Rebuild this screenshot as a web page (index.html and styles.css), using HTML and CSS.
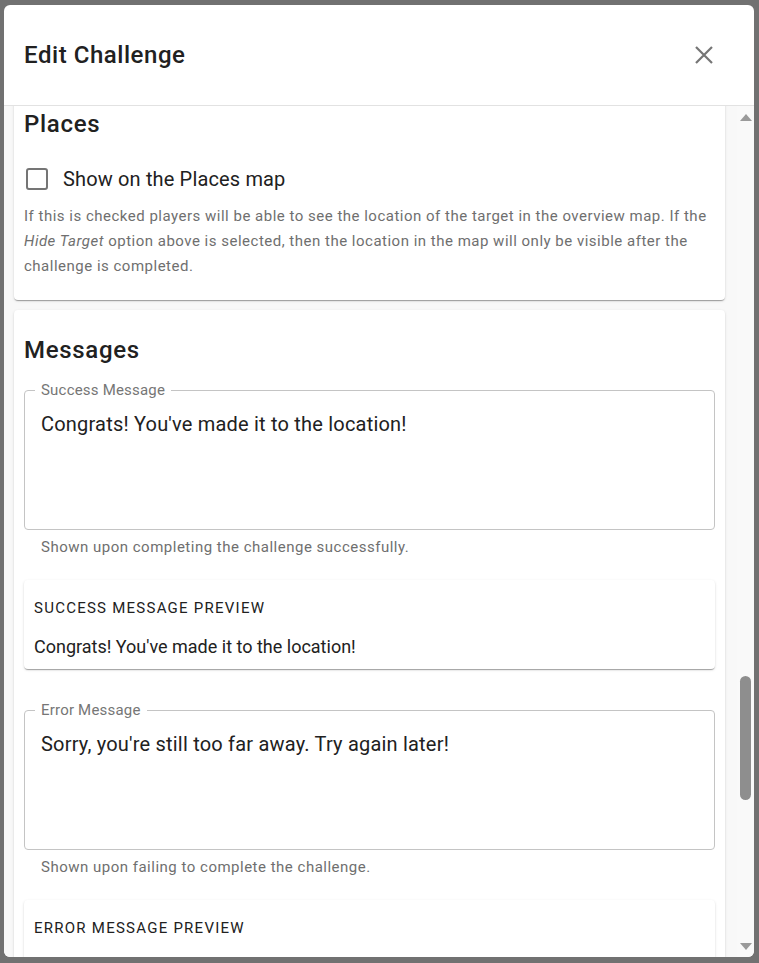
FILE: index.html
```html
<!DOCTYPE html>
<html lang="en">
<head>
<meta charset="utf-8">
<title>Edit Challenge</title>
<link rel="stylesheet" href="styles.css">
</head>
<body>
<div class="backdrop">
  <div class="dialog">
    <header class="dialog-header">
      <h2 class="dialog-title">Edit Challenge</h2>
      <button class="close-btn" aria-label="Close">
        <svg width="18" height="18" viewBox="0 0 18 18"><path d="M1 1L17 17M17 1L1 17" stroke="#757575" stroke-width="2.2" fill="none"/></svg>
      </button>
    </header>
    <div class="dialog-body">
      <div class="content">
        <section class="card card-places">
          <h3 class="section-title">Places</h3>
          <label class="check-row">
            <span class="checkbox"></span>
            <span class="check-label">Show on the Places map</span>
          </label>
          <p class="help">If this is checked players will be able to see the location of the target in the overview map. If the <em>Hide Target</em> option above is selected, then the location in the map will only be visible after the challenge is completed.</p>
        </section>

        <section class="card card-messages">
          <h3 class="section-title">Messages</h3>

          <fieldset class="field">
            <legend class="field-label">Success Message</legend>
            <div class="field-value">Congrats! You've made it to the location!</div>
          </fieldset>
          <p class="field-help">Shown upon completing the challenge successfully.</p>

          <div class="preview">
            <div class="preview-title">Success Message Preview</div>
            <div class="preview-text">Congrats! You've made it to the location!</div>
          </div>

          <fieldset class="field field-error">
            <legend class="field-label">Error Message</legend>
            <div class="field-value">Sorry, you're still too far away. Try again later!</div>
          </fieldset>
          <p class="field-help">Shown upon failing to complete the challenge.</p>

          <div class="preview">
            <div class="preview-title">Error Message Preview</div>
            <div class="preview-text">Sorry, you're still too far away. Try again later!</div>
          </div>
        </section>
      </div>
      <div class="scrollbar">
        <div class="arrow arrow-up"></div>
        <div class="track">
          <div class="thumb"></div>
        </div>
        <div class="arrow arrow-down"></div>
      </div>
    </div>
  </div>
</div>
</body>
</html>
```
FILE: styles.css
```css
* { box-sizing: border-box; }
html, body {
  margin: 0;
  padding: 0;
  width: 759px;
  height: 963px;
  overflow: hidden;
  font-family: Roboto, "Liberation Sans", sans-serif;
  color: #212121;
}
.backdrop {
  width: 759px;
  height: 963px;
  background: #717171;
  padding: 5px 5px 6px 4px;
}
.dialog {
  width: 750px;
  height: 952px;
  background: #fff;
  border-radius: 6px;
  overflow: hidden;
  display: flex;
  flex-direction: column;
}
.dialog-header {
  flex: 0 0 auto;
  height: 101px;
  border-bottom: 1px solid #e2e2e2;
  display: flex;
  align-items: center;
  justify-content: space-between;
  padding: 0 41px 0 20px;
}
.dialog-title {
  margin: 0;
  font-size: 24px;
  line-height: 32px;
  font-weight: 500;
  letter-spacing: 0.55px;
  color: #212121;
}
.close-btn {
  border: 0;
  background: none;
  padding: 0;
  width: 18px;
  height: 18px;
  display: block;
}
.close-btn svg { display: block; }
.dialog-body {
  flex: 1 1 auto;
  min-height: 0;
  display: flex;
}
.content {
  flex: 1 1 auto;
  min-width: 0;
  overflow: hidden;
  background: #f8f8f8;
  padding: 0 12px 0 10px;
}
.card {
  background: #fff;
  border-radius: 4px;
  box-shadow: 0 2px 1px -1px rgba(0,0,0,0.2), 0 1px 1px 0 rgba(0,0,0,0.14), 0 1px 3px 0 rgba(0,0,0,0.12);
  padding: 0 10px;
}
.card-places {
  margin-top: -10px;
  padding-top: 12px;
  padding-bottom: 21px;
}
.card-messages {
  margin-top: 10px;
  padding-top: 24px;
  padding-bottom: 40px;
}
.section-title {
  margin: 0;
  font-size: 24px;
  line-height: 32px;
  font-weight: 500;
  letter-spacing: 0.7px;
  color: #212121;
}
.check-row {
  margin-top: 18px;
  height: 42px;
  display: flex;
  align-items: center;
}
.checkbox {
  width: 22px;
  height: 22px;
  border: 2px solid #757575;
  border-radius: 3px;
  margin-left: 2px;
  flex: 0 0 auto;
}
.check-label {
  margin-left: 15px;
  font-size: 20px;
  letter-spacing: 0.15px;
  color: #212121;
}
.help {
  margin: 4px 0 0;
  font-size: 15px;
  line-height: 25px;
  letter-spacing: 0.5px;
  color: #6f6f6f;
}
.field {
  margin: 15px 0 0;
  padding: 0 16px 0 16px;
  border: 1px solid #c4c4c4;
  border-radius: 4px;
  min-width: 0;
  height: 149px;
}
.field-label {
  margin-left: -6px;
  padding: 0 6px;
  font-size: 15px;
  line-height: 18px;
  color: #767676;
  letter-spacing: 0.2px;
}
.field-value {
  padding-top: 11px;
  font-size: 20px;
  line-height: 28px;
  letter-spacing: 0.2px;
  color: #212121;
}
.field-help {
  margin: 7px 0 0 17px;
  font-size: 15px;
  line-height: 20px;
  letter-spacing: 0.5px;
  color: #6f6f6f;
}
.preview {
  margin-top: 23px;
  background: #fff;
  border-radius: 4px;
  box-shadow: 0 2px 1px -1px rgba(0,0,0,0.2), 0 1px 1px 0 rgba(0,0,0,0.14), 0 1px 3px 0 rgba(0,0,0,0.12);
  padding: 18px 10px 10px;
}
.preview-title {
  font-size: 15px;
  line-height: 20px;
  text-transform: uppercase;
  letter-spacing: 1.25px;
  color: #212121;
}
.preview-text {
  margin-top: 17px;
  font-size: 18px;
  line-height: 24px;
  color: #212121;
}
.field-error {
  margin-top: 32px;
}
.scrollbar {
  flex: 0 0 17px;
  background: #f9f9f9;
  display: flex;
  flex-direction: column;
  align-items: center;
}
.arrow {
  flex: 0 0 22px;
  width: 17px;
  display: flex;
  align-items: center;
  justify-content: center;
}
.arrow::before {
  content: "";
  width: 0;
  height: 0;
  border-left: 6px solid transparent;
  border-right: 6px solid transparent;
}
.arrow-up::before { border-bottom: 7px solid #9a9a9a; }
.arrow-down::before { border-top: 7px solid #9a9a9a; }
.track {
  flex: 1 1 auto;
  width: 17px;
  display: flex;
  justify-content: center;
}
.thumb {
  margin-top: 548px;
  width: 11px;
  height: 124px;
  border-radius: 6px;
  background: #8e8e8e;
}
```
